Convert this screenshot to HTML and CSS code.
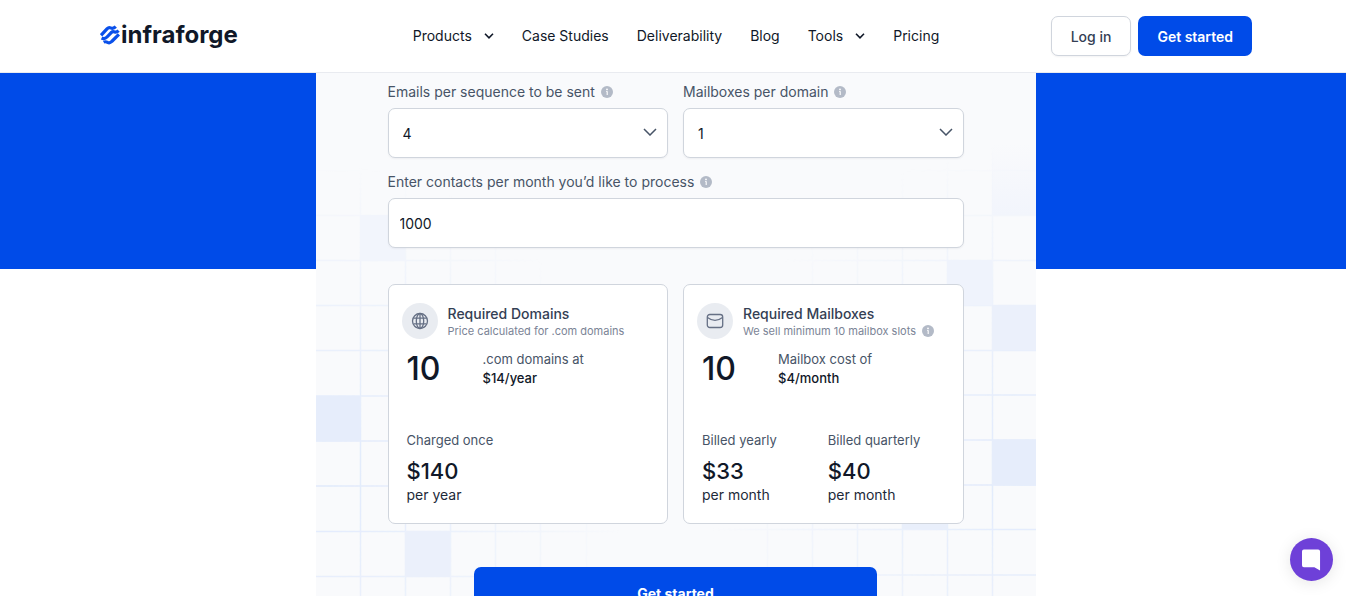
FILE: index.html
```
<!DOCTYPE html>
<html lang="en">
<head>
<meta charset="utf-8">
<meta name="viewport" content="width=device-width, initial-scale=1">
<title>Infraforge pricing</title>
<link rel="stylesheet" href="styles.css">
</head>
<body>
<svg class="sprite" aria-hidden="true">
  <symbol id="info" viewBox="0 0 12 12"><circle cx="6" cy="6" r="6" fill="#b3bac7"/><circle cx="6" cy="3.4" r=".9" fill="#fff"/><path d="M6.200 5.200v3.800M5.200 5.500h1" stroke="#fff" stroke-width="1.1" fill="none"/></symbol>
  <symbol id="chevron" viewBox="0 0 14 8"><path d="M1 1l6 6 6-6" fill="none" stroke="#475467" stroke-width="1.5"/></symbol>
  <symbol id="caret" viewBox="0 0 10 6"><path d="M1 .8l4 4 4-4" fill="none" stroke="#101828" stroke-width="1.6"/></symbol>
</svg>
<header class="header">
  <div class="header-inner">
    <a class="logo" href="#">
      <svg class="logo-mark" viewBox="0 0 20 20" aria-hidden="true"><g fill="none" stroke="#0a50ea" stroke-width="3.2" stroke-linejoin="round"><path d="M1 10.300L7.200 3.600Q8.800 2 10.600 2.900Q13.300 4.200 15.800 1.700"/><path d="M1.600 13Q4.600 14.500 7 12L11 7.800Q12.800 6.200 14.700 7Q16.600 7.600 18.600 5.600"/><path d="M3.600 17.200Q5.500 16.200 7.600 17.400Q9.800 18.500 11.700 16.500L18.900 9.300"/></g></svg>
      <span>infraforge</span>
    </a>
    <nav class="nav">
      <a class="nav-drop" href="#">Products <svg class="caret"><use href="#caret"/></svg></a>
      <a href="#">Case Studies</a>
      <a href="#">Deliverability</a>
      <a href="#">Blog</a>
      <a class="nav-drop" href="#">Tools <svg class="caret"><use href="#caret"/></svg></a>
      <a href="#">Pricing</a>
    </nav>
    <div class="actions">
      <button class="btn btn-outline" type="button">Log in</button>
      <button class="btn btn-primary" type="button">Get started</button>
    </div>
  </div>
</header>
<main class="main">
  <div class="band">
    <section class="panel">
      <svg class="grid grid-left" viewBox="0 0 360 600" aria-hidden="true">
        <defs>
          <radialGradient id="fadeL" gradientUnits="userSpaceOnUse" cx="0" cy="400" r="310"><stop offset="0" stop-color="#fff"/><stop offset="1" stop-color="#fff" stop-opacity="0"/></radialGradient>
          <mask id="maskL" maskUnits="userSpaceOnUse" x="0" y="0" width="360" height="600"><rect width="360" height="600" fill="url(#fadeL)"/></mask>
        </defs>
        <g mask="url(#maskL)">
          <path class="lines" d="M44.500 0V600M89.500 0V600M134.500 0V600M179.500 0V600M224.500 0V600M270.500 0V600M0 97.500H360M0 142.500H360M0 187.500H360M0 232.500H360M0 277.500H360M0 323H360M0 368H360M0 413H360M0 458.500H360M0 503.500H360"/>
        </g>
        <path fill="#f2f5fc" d="M44 142h45v46H44z"/><path fill="#e6edfb" d="M0 323h44v45H0z"/><path fill="#ebf0fb" d="M89 458h45v46H89z"/>
      </svg>
      <svg class="grid grid-right" viewBox="0 0 360 600" aria-hidden="true">
        <defs>
          <radialGradient id="fadeR" gradientUnits="userSpaceOnUse" cx="360" cy="400" r="330"><stop offset="0" stop-color="#fff"/><stop offset="1" stop-color="#fff" stop-opacity="0"/></radialGradient>
          <mask id="maskR" maskUnits="userSpaceOnUse" x="0" y="0" width="360" height="600"><rect width="360" height="600" fill="url(#fadeR)"/></mask>
          <linearGradient id="topSquare" x1="0" y1="0" x2="0" y2="1"><stop offset="0" stop-color="#f3f5fc" stop-opacity="0"/><stop offset="1" stop-color="#f2f5fc"/></linearGradient>
        </defs>
        <g mask="url(#maskR)">
          <path class="lines" d="M316.500 0V600M271.500 0V600M226.500 0V600M181.500 0V600M136.500 0V600M91.500 0V600M0 97.500H360M0 142.500H360M0 187.500H360M0 232.500H360M0 277.500H360M0 322H360M0 367H360M0 412H360M0 456.500H360M0 502H360"/>
        </g>
        <path fill="url(#topSquare)" d="M316 70h44v72h-44z"/><path fill="#eff3fc" d="M271 187h45v45h-45z"/><path fill="#ebf0fb" d="M316 232h44v45h-44z"/><path fill="#e6edfb" d="M316 367h44v45h-44z"/><path fill="#e9effb" d="M226 412h45v44h-45z"/>
      </svg>
      <form class="form">
        <div class="two">
          <div class="field">
            <div class="label"><label for="emails">Emails per sequence to be sent</label><svg class="info"><use href="#info"/></svg></div>
            <div class="select-wrap"><select class="control" id="emails"><option>4</option></select><svg class="chevron"><use href="#chevron"/></svg></div>
          </div>
          <div class="field">
            <div class="label"><label for="boxes">Mailboxes per domain</label><svg class="info"><use href="#info"/></svg></div>
            <div class="select-wrap"><select class="control" id="boxes"><option>1</option></select><svg class="chevron"><use href="#chevron"/></svg></div>
          </div>
        </div>
        <div class="field">
          <div class="label"><label for="contacts">Enter contacts per month you’d like to process</label><svg class="info"><use href="#info"/></svg></div>
          <input class="control control-text" id="contacts" type="text" value="1000">
        </div>
        <div class="two results">
          <article class="card">
            <div class="card-head">
              <span class="badge"><svg class="globe" viewBox="0 0 18 18" fill="none" stroke="#667085" stroke-width="1.300"><circle cx="9" cy="9" r="7.500"/><ellipse cx="9" cy="9" rx="3.700" ry="7.500"/><path d="M2.500 6.200h13M2.500 11.800h13M9 1.500v15" /></svg></span>
              <div><h2>Required Domains</h2><p class="note">Price calculated for .com domains</p></div>
            </div>
            <div class="count"><strong>10</strong><p>.com domains at<b>$14/year</b></p></div>
            <div class="bills"><div><p class="when">Charged once</p><p class="price">$140</p><p class="per">per year</p></div></div>
          </article>
          <article class="card">
            <div class="card-head">
              <span class="badge"><svg class="globe" viewBox="0 0 18 18" fill="none" stroke="#667085" stroke-width="1.300"><rect x="1.300" y="2.500" width="15.400" height="13" rx="2.500"/><path d="M1.500 5.500Q5 8.300 9 8.300T16.500 5.500"/></svg></span>
              <div><h2>Required Mailboxes</h2><p class="note">We sell minimum 10 mailbox slots<svg class="info"><use href="#info"/></svg></p></div>
            </div>
            <div class="count"><strong>10</strong><p>Mailbox cost of<b>$4/month</b></p></div>
            <div class="bills"><div><p class="when">Billed yearly</p><p class="price">$33</p><p class="per">per month</p></div><div><p class="when">Billed quarterly</p><p class="price">$40</p><p class="per">per month</p></div></div>
          </article>
        </div>
        <button class="submit" type="button">Get started</button>
      </form>
    </section>
  </div>
</main>
<button class="chat" type="button" aria-label="Open chat"><svg viewBox="0 0 20 22" aria-hidden="true"><path d="M2 0h15q2 0 2 2v20l-6-3.500H2q-2 0-2-2V2q0-2 2-2z" fill="#fff"/></svg></button>
</body>
</html>
```
FILE: styles.css
```
* { box-sizing: border-box; }
body {
  margin: 0;
  height: 100vh;
  display: flex;
  flex-direction: column;
  font-family: Inter, "Liberation Sans", sans-serif;
  font-size: 14px;
  color: #101828;
  background: #fff;
}
h2, p { margin: 0; }
a { color: inherit; text-decoration: none; }
button, select, input { font: inherit; color: inherit; }
.sprite { position: absolute; width: 0; height: 0; }

.header { flex: none; padding-left: 6px; border-bottom: 1px solid #e9ebf0; background: #fff; }
.header-inner {
  display: grid;
  grid-template-columns: 1fr auto 1fr;
  align-items: center;
  max-width: 1152px;
  height: 72px;
  margin: 0 auto;
}
.logo { display: flex; align-items: center; gap: 1px; font-size: 24px; line-height: 30px; font-weight: 700; padding-bottom: 2px; }
.logo-mark { width: 20px; height: 20px; }
.nav { display: flex; gap: 28px; line-height: 24px; }
.nav-drop { display: flex; align-items: center; gap: 12px; }
.caret { width: 10px; height: 6px; }
.actions { display: flex; justify-content: flex-end; gap: 7px; }
.btn { height: 40px; padding: 0 19px; border-radius: 7px; font-weight: 600; }
.btn-outline { border: 1px solid #d0d5dd; background: #fff; color: #344054; font-weight: 500; box-shadow: 0 1px 2px #1018280d; }
.btn-primary { border: 0; background: #004be8; color: #fff; }

.main { flex: 1; min-height: 0; overflow-y: auto; scrollbar-width: none; }
.band { padding-left: 5px; background: linear-gradient(#004be8 196px, #fff 196px); }
.panel { position: relative; max-width: 720px; margin: 0 auto; padding: 9px 72px 48px; background: #f9fafc; overflow: hidden; }
.grid { position: absolute; top: 0; width: 360px; height: 600px; }
.grid-left { left: 0; }
.grid-right { right: 0; }
.lines { fill: none; stroke: #dfe9fc; stroke-width: 1.5; }

.form { position: relative; display: flex; flex-direction: column; gap: 14px; }
.two { display: grid; grid-template-columns: 1fr 1fr; gap: 15px; }
.label { display: flex; align-items: center; gap: 6px; line-height: 20px; margin-bottom: 6px; color: #475467; }
.info { width: 12px; height: 12px; }
.select-wrap { position: relative; }
.control {
  display: block;
  width: 100%;
  height: 50px;
  padding: 0 14px;
  border: 1px solid #d0d5dd;
  border-radius: 7px;
  background: #fff;
  box-shadow: 0 1px 2px #1018280d;
  appearance: none;
}
.control-text { padding: 0 11px; }
.chevron { position: absolute; right: 11px; top: 20px; width: 14px; height: 8px; pointer-events: none; }

.results { margin-top: 22px; }
.card { height: 240px; padding: 18px 13px; border: 1px solid #d0d5dd; border-radius: 7px; background: #fff; }
.card-head { display: flex; align-items: center; gap: 10px; height: 36px; }
.badge { display: flex; align-items: center; justify-content: center; width: 36px; height: 36px; border-radius: 50%; background: #e9ecf1; }
.globe { width: 18px; height: 18px; }
h2 { font-size: 14px; line-height: 20px; font-weight: 500; color: #344054; }
.note { display: flex; align-items: center; gap: 6px; font-size: 11px; line-height: 15px; color: #7b8496; }
.count { display: grid; grid-template-columns: 76px 1fr; align-items: center; height: 40px; margin-top: 10px; padding-left: 5px; }
.count strong { font-size: 32px; line-height: 40px; font-weight: 500; }
.count p { font-size: 13px; line-height: 19px; color: #475467; }
.count b { display: block; font-weight: 500; color: #101828; }
.bills { display: grid; grid-template-columns: 1fr 1fr; gap: 4px; margin-top: 42px; padding-left: 5px; }
.when { font-size: 13px; line-height: 18px; color: #475467; }
.price { margin-top: 8px; font-size: 22px; line-height: 28px; font-weight: 500; }
.per { line-height: 20px; color: #1d2939; }
.submit { width: 70%; height: 52px; margin: 29px auto 0; border: 0; border-radius: 7px; background: #004be8; color: #fff; font-weight: 700; }
.chat {
  position: fixed;
  right: 13px;
  bottom: 15px;
  display: grid;
  place-items: center;
  width: 43px;
  height: 43px;
  padding: 0;
  border: 0;
  border-radius: 50%;
  background: #6e40d8;
  box-shadow: 0 2px 16px #0000001a;
}
.chat svg { width: 19px; height: 22px; }
```
